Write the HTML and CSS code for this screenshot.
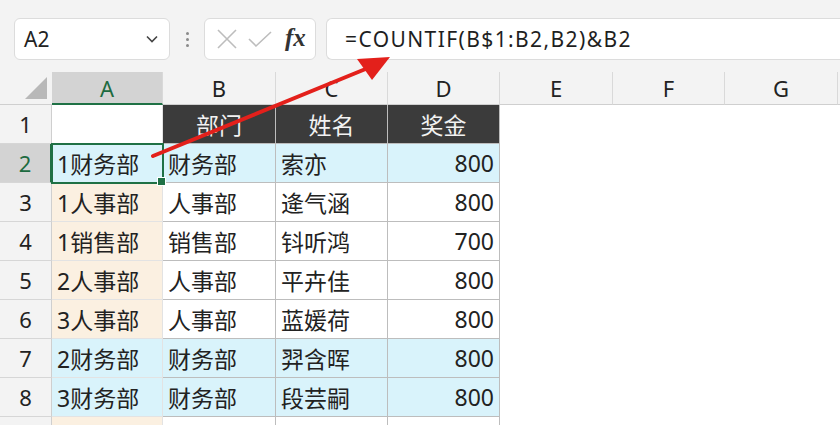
FILE: index.html
```html
<!DOCTYPE html>
<html lang="zh-CN">
<head>
  <meta charset="UTF-8" />
  <title>COUNTIF</title>
  <link rel="stylesheet" href="styles.css">
</head>
<body>
  <div class="toolbar">
    <div class="name-box">
      <span>A2</span>
      <svg class="chev" width="14" height="10" viewBox="0 0 14 10"><path d="M2 2.5 L7 7.5 L12 2.5" fill="none" stroke="#444" stroke-width="1.6"/></svg>
    </div>
    <div class="grip"><i></i><i></i><i></i></div>
    <div class="fx-box">
      <svg width="24" height="24" viewBox="0 0 24 24"><path d="M3 3 L21 21 M21 3 L3 21" stroke="#bdbdbd" stroke-width="1.6" fill="none"/></svg>
      <svg width="26" height="24" viewBox="0 0 26 24"><path d="M2 12 L9 19 L24 5" stroke="#bdbdbd" stroke-width="1.6" fill="none"/></svg>
      <span class="fx">fx</span>
    </div>
    <div class="formula">=COUNTIF(B$1:B2,B2)&amp;B2</div>
  </div>

  <div class="sheet">
    <!-- column headers -->
    <div class="corner"><svg width="22" height="22" viewBox="0 0 22 22"><path d="M22 0 L22 22 L0 22 Z" fill="#b8b8b8"/></svg></div>
    <div class="colh on">A</div>
    <div class="colh">B</div>
    <div class="colh">C</div>
    <div class="colh">D</div>
    <div class="colh">E</div>
    <div class="colh">F</div>
    <div class="colh">G</div>
    <div class="colh end"></div>

    <!-- row 1 -->
    <div class="rowh">1</div>
    <div class="c a-plain"></div>
    <div class="c th">部门</div>
    <div class="c th">姓名</div>
    <div class="c th">奖金</div>
    <div class="c e"></div><div class="c e"></div><div class="c e"></div><div class="c e"></div>

    <!-- row 2 -->
    <div class="rowh on">2</div>
    <div class="c blue sel">1财务部</div>
    <div class="c blue t">财务部</div>
    <div class="c blue t">索亦</div>
    <div class="c blue t num">800</div>
    <div class="c e"></div><div class="c e"></div><div class="c e"></div><div class="c e"></div>

    <!-- row 3 -->
    <div class="rowh">3</div>
    <div class="c beige">1人事部</div>
    <div class="c t">人事部</div>
    <div class="c t">逄气涵</div>
    <div class="c t num">800</div>
    <div class="c e"></div><div class="c e"></div><div class="c e"></div><div class="c e"></div>

    <!-- row 4 -->
    <div class="rowh">4</div>
    <div class="c beige">1销售部</div>
    <div class="c t">销售部</div>
    <div class="c t">钭听鸿</div>
    <div class="c t num">700</div>
    <div class="c e"></div><div class="c e"></div><div class="c e"></div><div class="c e"></div>

    <!-- row 5 -->
    <div class="rowh">5</div>
    <div class="c beige">2人事部</div>
    <div class="c t">人事部</div>
    <div class="c t">平卉佳</div>
    <div class="c t num">800</div>
    <div class="c e"></div><div class="c e"></div><div class="c e"></div><div class="c e"></div>

    <!-- row 6 -->
    <div class="rowh">6</div>
    <div class="c beige">3人事部</div>
    <div class="c t">人事部</div>
    <div class="c t">蓝媛荷</div>
    <div class="c t num">800</div>
    <div class="c e"></div><div class="c e"></div><div class="c e"></div><div class="c e"></div>

    <!-- row 7 -->
    <div class="rowh">7</div>
    <div class="c blue">2财务部</div>
    <div class="c blue t">财务部</div>
    <div class="c blue t">羿含晖</div>
    <div class="c blue t num">800</div>
    <div class="c e"></div><div class="c e"></div><div class="c e"></div><div class="c e"></div>

    <!-- row 8 -->
    <div class="rowh">8</div>
    <div class="c blue">3财务部</div>
    <div class="c blue t">财务部</div>
    <div class="c blue t">段芸嗣</div>
    <div class="c blue t num">800</div>
    <div class="c e"></div><div class="c e"></div><div class="c e"></div><div class="c e"></div>

    <!-- row 9, only its top edge shows -->
    <div class="rowh"></div>
    <div class="c beige"></div>
    <div class="c t"></div>
    <div class="c t"></div>
    <div class="c t"></div>
    <div class="c e"></div><div class="c e"></div><div class="c e"></div><div class="c e"></div>
  </div>

  <!-- red arrow pointing to the formula -->
  <svg class="arrow" width="840" height="425" viewBox="0 0 840 425">
    <line x1="153" y1="156" x2="368" y2="68" stroke="#e3201b" stroke-width="4" stroke-linecap="round"/>
    <polygon points="390,57 357,59 372,80" fill="#e3201b"/>
  </svg>
</body>
</html>
```

FILE: styles.css
```css
* {
  box-sizing: border-box;
  margin: 0;
  padding: 0;
}

body {
  width: 840px;
  height: 425px;
  overflow: hidden;
  background: #fff;
  font-family: "Noto Sans", "Noto Sans CJK SC", sans-serif;
  color: #222;
  position: relative;
}

/* Formula bar */
.toolbar {
  height: 72px;
  background: #f3f3f3;
  display: flex;
  align-items: center;
  padding: 6px 0 0 14px;
}

.name-box {
  width: 156px;
  height: 42px;
  background: #fff;
  border: 1px solid #dcdcdc;
  border-radius: 6px;
  display: flex;
  align-items: center;
  justify-content: space-between;
  padding: 0 10px 0 9px;
  font-size: 21px;
}

.grip {
  width: 34px;
  display: flex;
  flex-direction: column;
  align-items: center;
  gap: 3px;
}

.grip i {
  width: 3px;
  height: 3px;
  border-radius: 50%;
  background: #8a8a8a;
}

.fx-box {
  width: 112px;
  height: 42px;
  background: #fff;
  border: 1px solid #dcdcdc;
  border-radius: 6px;
  display: flex;
  align-items: center;
  gap: 8px;
  padding-left: 10px;
}

.fx {
  font-family: "Liberation Serif", "DejaVu Serif", serif;
  font-style: italic;
  font-weight: bold;
  font-size: 25px;
  color: #333;
  margin-left: 4px;
  margin-top: -3px;
}

.formula {
  flex: 1;
  height: 42px;
  margin-left: 10px;
  background: #fff;
  border: 1px solid #dcdcdc;
  border-right: none;
  border-radius: 6px 0 0 6px;
  display: flex;
  align-items: center;
  padding-left: 18px;
  font-size: 21px;
  letter-spacing: 1.4px;
  color: #1f1f1f;
}

/* Grid */
.sheet {
  display: grid;
  grid-template-columns: 52px 111px 113px 112px 112px 113px 112px 113px 2px;
  grid-template-rows: 33px repeat(9, 39px);
  font-size: 23px;
}

.corner {
  background: #f3f3f3;
  border-bottom: 1px solid #cfcfcf;
  display: flex;
  align-items: flex-end;
  justify-content: flex-end;
  padding: 0 5px 5px 0;
}

.colh {
  background: #f3f3f3;
  border-bottom: 1px solid #cfcfcf;
  border-right: 1px solid #d9d9d9;
  display: flex;
  align-items: center;
  justify-content: center;
  font-size: 22px;
  color: #222;
}

.colh.on {
  background: #d3d3d3;
  color: #1d6b40;
  border-bottom: 2px solid #1f7145;
}

.colh.end {
  border-right: none;
}

.rowh {
  background: #f3f3f3;
  border-bottom: 1px solid #d6d6d6;
  border-right: 1px solid #cfcfcf;
  display: flex;
  align-items: center;
  justify-content: center;
  font-size: 22px;
  color: #222;
}

.rowh.on {
  background: #d3d3d3;
  color: #1d6b40;
  border-right: 2px solid #1f7145;
}

.c {
  display: flex;
  align-items: center;
  padding: 0 5px;
  white-space: nowrap;
  border-right: 1px solid #e3e3e3;
  border-bottom: 1px solid #e3e3e3;
}

.c.t {
  border-color: #bdbdbd;
}

.c.th {
  background: #3b3b3b;
  color: #f2f2f2;
  justify-content: center;
  border-right: 1px solid #bdbdbd;
  border-bottom: 1px solid #bdbdbd;
}

.c.num {
  justify-content: flex-end;
}

.c.e {
  border: none;
}

.blue {
  background: #d9f3fb;
}

.beige {
  background: #fbf0e1;
}

.c.sel {
  position: relative;
  outline: 2px solid #1f7145;
  outline-offset: -1px;
  z-index: 1;
}

.c.sel::after {
  content: "";
  position: absolute;
  right: -4px;
  bottom: -4px;
  width: 7px;
  height: 7px;
  background: #1f7145;
  border: 1px solid #fff;
}

.arrow {
  position: absolute;
  top: 0;
  left: 0;
  z-index: 5;
  pointer-events: none;
}
```
